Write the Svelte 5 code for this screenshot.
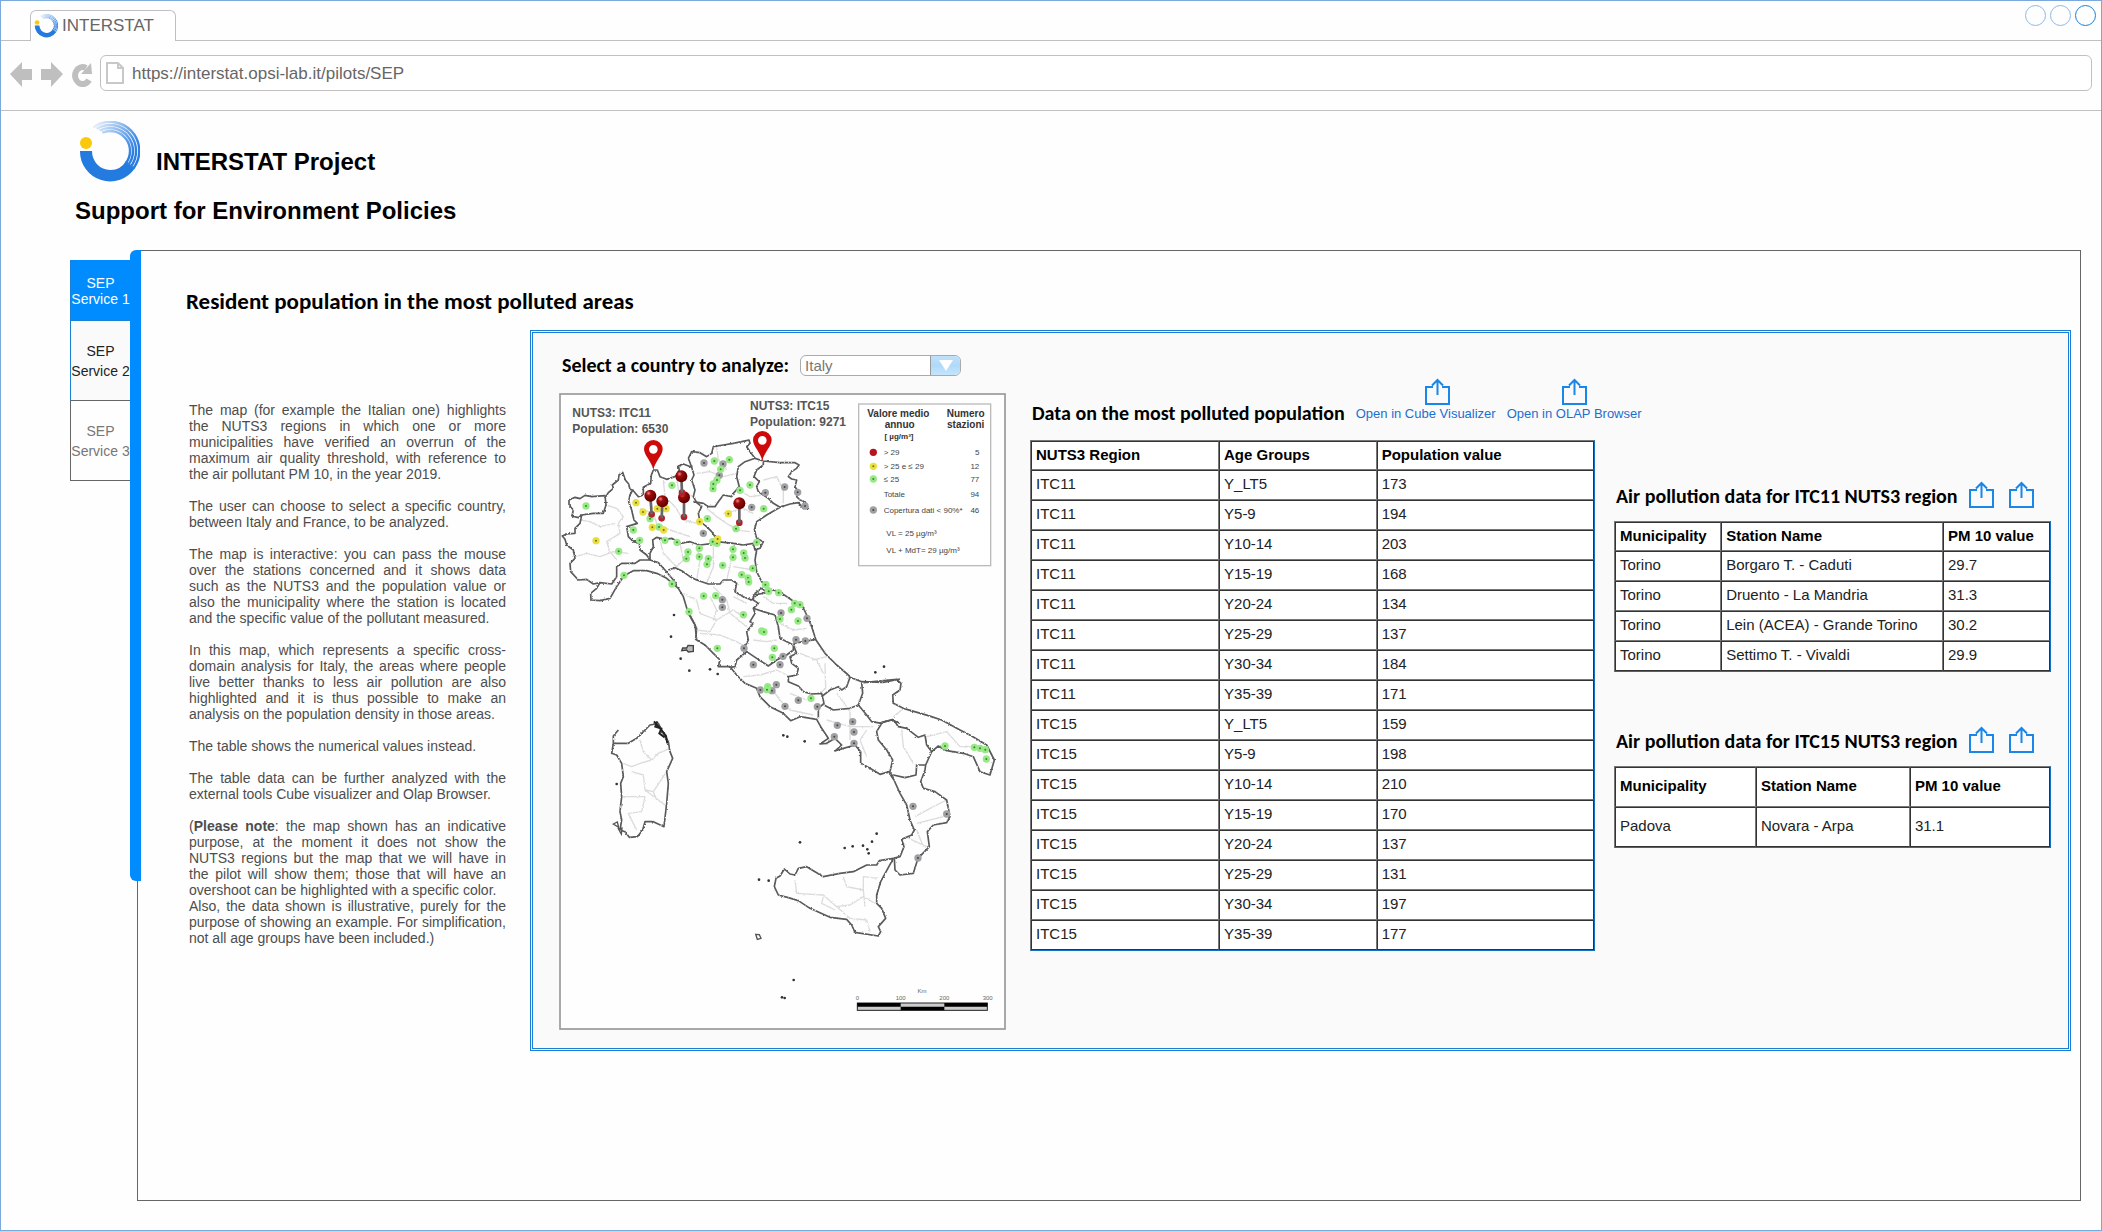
<script>
  const ages = ['Y_LT5', 'Y5-9', 'Y10-14', 'Y15-19', 'Y20-24', 'Y25-29', 'Y30-34', 'Y35-39'];
  const values = {
    ITC11: [173, 194, 203, 168, 134, 137, 184, 171],
    ITC15: [159, 198, 210, 170, 137, 131, 197, 177]
  };
  const population = Object.entries(values).flatMap(([region, list]) =>
    list.map((value, i) => ({ region, age: ages[i], value }))
  );

  const pollution = [
    {
      region: 'ITC11',
      kind: 'dense',
      rows: [
        ['Torino', 'Borgaro T. - Caduti', '29.7'],
        ['Torino', 'Druento - La Mandria', '31.3'],
        ['Torino', 'Lein (ACEA) - Grande Torino', '30.2'],
        ['Torino', 'Settimo T. - Vivaldi', '29.9']
      ]
    },
    { region: 'ITC15', kind: 'roomy', rows: [['Padova', 'Novara - Arpa', '31.1']] }
  ];

  const services = ['SEP Service 1', 'SEP Service 2', 'SEP Service 3'];
  let active = $state(0);
  let country = $state('Italy');

  // Fading arcs of the logo, drawn round the centre of its ring.
  const arcs = [29, 26, 23, 20].map((r, i) => {
    const at = (deg) => {
      const a = (deg * Math.PI) / 180;
      return `${(32 + r * Math.cos(a)).toFixed(1)} ${(30 + r * Math.sin(a)).toFixed(1)}`;
    };
    return `M${at(38)}A${r} ${r} 0 0 0 ${at(-125 + i * 4)}`;
  });

  // Station dots and outlines are kept in three blocks: north, centre, south.
  const blocks = [
    {
      id: 'north',
      shift: 'translate(-27 -39)',
      outlines: [
        'M57 360L75 352 90 356 105 346 125 350 165 347 168 375 160 400 130 400 95 405 85 413 66 408 70 390 57 375Z',
        'M168 350L175 338 190 325 187 315 205 300 207 285 218 277 226 300 236 312 240 328 248 330 240 345 236 365 245 390 252 420 262 430 230 440 235 470 250 485 268 490 270 510 290 525 300 540 270 540 255 550 215 550 200 560 200 590 185 612 150 608 130 612 110 598 85 600 62 575 60 550 75 535 70 510 50 495 45 478 37 468 50 462 75 460 75 445 90 430 95 405',
        'M150 608L140 625 122 640 123 660 150 662 180 655 200 620 222 587 250 572 290 572 320 580 350 595 385 625 400 650 412 690 425 715 440 745 437 780',
        'M300 540L325 548 345 570 370 600 380 615',
        'M248 330L265 350 280 345 280 322 302 310 304 285 310 270 322 270 330 290 350 298 375 290 388 270 385 258 400 252 425 262 432 285 425 300 435 330 430 350 440 368 455 380 445 400 450 425 470 440 485 455 500 478 490 490 450 495 420 485 390 490 365 475 345 478 320 472 308 480 310 500 300 520 300 540',
        'M425 262L415 235 425 215 450 218 470 230 485 220 490 200 520 195 550 190 575 185 597 180 600 190 590 200 600 215 615 235 585 245 565 260 560 290 568 320 550 340 545 350 520 345 505 365 495 380 475 380 460 370 430 365',
        'M615 235L640 243 690 248 735 248 747 255 740 265 725 275 715 290 725 297 740 300 735 320 745 335 740 350 750 360 765 365 775 385 760 385 745 368 720 372 690 382 670 370 655 355 640 345 625 335 620 320 628 305 612 290 620 270 640 255 640 243',
        'M690 382L650 405 620 425 613 450 620 475 640 485 630 505 615 510 610 490 580 495 550 490 500 485',
        'M620 510L615 540 620 575 635 605 650 620 655 640',
        'M355 570L375 563 395 572 420 590 440 600 475 612 510 612 520 600 545 600 560 610 555 635 580 650 605 660 620 645 615 640 635 625 655 640'
      ],
      inner: [
        'M168 375L200 385 220 410 205 430 210 460 170 485 180 515 200 540',
        'M90 420L120 425 150 440 195 430M75 530L110 520 150 530 190 515 235 520',
        'M270 385L310 400 320 430 360 450 420 470M340 300L345 350 375 380 400 420 440 430M380 290L385 330 430 350',
        'M440 280L480 275 520 290 560 280M500 200L505 240 530 270',
        'M470 385L500 410 530 430 560 450 600 455M520 400L580 385 610 400M570 330L600 350 640 345',
        'M640 300L680 290 700 330 700 370',
        'M330 480L340 520 380 560M390 490L400 540 370 570M440 495L450 540 440 600M490 490L490 560 470 610M550 495L540 560 530 600M550 560L610 570',
        'M400 640L440 660 450 700 500 720M490 620L530 660 540 700 590 740'
      ],
      green: [[108,378],[366,316],[493,243],[538,239],[512,268],[501,300],[490,312],[489,326],[570,331],[600,315],[641,386],[472,416],[558,446],[300,416],[327,441],[250,450],[269,481],[206,514],[345,481],[381,487],[414,516],[409,536],[448,505],[448,530],[475,536],[471,553],[518,556],[549,508],[549,532],[581,519],[585,534],[608,565],[575,584],[594,594],[596,606],[620,487],[222,586],[366,612],[417,695],[648,614],[655,632],[501,490],[488,485]],
      yellow: [[138,482],[258,368],[279,396],[322,386],[348,386],[307,442],[341,450],[535,401],[449,425],[503,477]],
      grey: [[462,249],[519,252],[508,286],[646,338],[704,321],[743,337],[605,382],[460,460],[765,378]]
    },
    {
      id: 'centre',
      shift: 'translate(183 501)',
      outlines: [
        'M440 85L478 95 515 120 548 140 560 165 575 200 588 240 615 280 650 315 685 345 690 352 725 365 790 367 840 357',
        'M205 160L225 195 230 240 255 255 280 280 300 300 295 320 330 320 350 345 375 370 410 385 420 410 450 440 490 460 512 482 540 470 590 478 605 505 625 535 600 552 620 550 645 535 665 555 645 573 660 568 705 555 722 575 722 610 750 625 780 643 808 635 820 650',
        'M440 98L400 105 400 120 415 130 400 145 405 160 390 185 400 190 380 215 385 240 375 260 380 275 350 300 345 320 330 322',
        'M400 145L430 155 465 165 475 200 480 235 520 255 520 270 500 285 470 300 445 318 410 295 380 275',
        'M520 250L550 245 588 238',
        'M520 255L530 280 510 290 515 310 535 325 530 345 505 350 505 365 535 378 550 395 575 402 605 400 612 430 595 445 595 475',
        'M605 410L630 390 655 380 665 390 680 380 690 352',
        'M612 435L640 450 690 445 715 435',
        'M725 367L728 400 715 435 740 465 755 485 785 490 770 515 775 540 800 570 818 600 810 635',
        'M785 487L815 480 840 490'
      ],
      inner: [
        'M230 210L270 215 290 180 340 150 375 175M240 220L300 225 350 245 375 260M270 110L290 150 280 180M340 110L380 130',
        'M400 240L440 245 470 240M480 190L520 210 560 205M430 110L460 130 500 130',
        'M370 350L420 345 470 330 500 345M450 380L480 420 510 450 580 465M510 400L560 420',
        'M540 280L590 300 610 340M580 300L620 290M615 310L617 385 600 400M650 400L680 440M620 480L690 500 760 500M690 450L690 540M740 590L720 540 740 510'
      ],
      green: [[251,108],[287,107],[370,164],[292,265],[425,213],[432,216],[463,265],[457,292],[443,380],[441,389],[573,415],[436,74],[446,94],[476,98],[524,130],[540,134],[514,149],[480,177],[534,183]],
      yellow: [],
      grey: [[307,119],[307,142],[483,159],[561,175],[528,239],[556,243],[372,265],[489,289],[400,314],[480,314],[421,390],[469,374],[456,392],[535,421],[495,439],[592,440],[652,496],[698,485],[702,516],[643,530],[702,550]]
    },
    {
      id: 'south',
      shift: 'translate(-27 711)',
      outlines: [
        'M940 158L1040 148 1053 160 1050 180 1028 195 1030 220 1060 235 1135 257 1175 270 1230 300 1265 318 1310 345 1333 390 1320 435 1290 425 1270 380 1240 370 1190 362 1165 348 1145 365 1127 405 1125 420 1112 455 1120 475 1155 485 1190 510 1200 560 1190 578 1150 585 1132 605 1138 650 1104 685 1090 730 1050 735 1035 720 1033 685',
        'M1018 430L1032 450 1050 490 1070 525 1080 570 1093 600 1085 615 1055 628 1062 650 1050 680 1030 685',
        'M995 278L1030 268 1045 290 1070 295 1105 322 1125 315 1130 345 1145 365',
        'M1127 405L1100 405 1098 435 1065 443 1030 435',
        'M1030 685L988 692 980 705 950 705 910 725 870 730 820 740 795 725 770 710 745 715 735 735 720 732 703 717 690 738 678 745 673 770 685 795 715 803 745 812 780 835 840 862 890 868 905 885 915 907 985 918 992 905 985 890 1007 865 995 835 980 820 980 795 992 755 1030 685',
        'M190 340L190 318 205 300M190 340L235 340 260 325 300 285 325 280 340 310 355 335 360 365 368 385 350 425 355 460 350 520 342 590 310 575 285 575 278 600 262 620 238 622 225 605 210 600 215 570 210 545 215 500 212 460 220 440 215 400 200 375 185 370 190 340'
      ],
      inner: [
        'M270 330L280 365 305 390 325 370 360 355M220 400L245 410 270 400 305 390M245 425L280 435 285 480 310 485 350 425M285 480L345 525M220 500L285 500 275 545 235 550 260 600M310 485L320 510',
        'M1030 260L1055 240M1055 300L1060 350 1090 400M1130 320L1190 305 1230 350 1270 350M1095 560L1150 530 1190 510M1100 580L1180 560M1065 620L1130 650M1100 600L1120 650',
        'M735 750L740 790 820 795 860 830 900 825 940 800 975 820M880 740L890 770 940 780 940 740 985 745M820 800L815 820 855 840M860 830L900 865 950 870 960 905M940 780L945 830'
      ],
      green: [[1185,348],[1273,352],[1290,355],[1306,359],[1309,387]],
      yellow: [],
      grey: [[1089,529],[1190,552],[1104,684]]
    }
  ];

  const pins = [[301,347,305,403],[337,364,335,415],[402,352,402,411],[394,289,396,338],[568,370,568,428]];
  const markers = [[310,208],[637,181]];
  const islets = [[363,20],[392,86],[418,122],[480,118],[503,132],[976,127],[1002,110],[700,316],[712,320],[764,334],[750,637],[884,654],[908,649],[939,647],[952,658],[956,670],[966,635],[980,611],[627,749],[656,752],[731,1050],[696,1102],[704,1104],[200,462],[372,-45]];
  const legend = [
    { y: 217, label: '> 29', count: 5, tone: 'red' },
    { y: 259, label: '> 25 e ≤ 29', count: 12, tone: 'yellow' },
    { y: 297, label: '≤ 25', count: 77, tone: 'green' },
    { y: 344, label: 'Totale', count: 94, tone: '' },
    { y: 390, label: 'Copertura dati < 90%*', count: 46, tone: 'grey' }
  ];
</script>

{#snippet logo(cls, gid)}
  <svg class={cls} viewBox="0 0 62 62" aria-hidden="true">
    <defs>
      <linearGradient id={gid} gradientUnits="userSpaceOnUse" x1="14" y1="6" x2="54" y2="34">
        <stop offset="0" stop-color="#2a7de1" stop-opacity="0.1" />
        <stop offset="1" stop-color="#2a7de1" />
      </linearGradient>
    </defs>
    <path d="M2 30A30 30 0 0 0 57 47L48 40A18 18 0 0 1 32 49A18 19 0 0 1 14 30Z" fill="#237be0" />
    {#each arcs as d}
      <path {d} fill="none" stroke="url(#{gid})" stroke-width="2.4" />
    {/each}
    <circle cx="8" cy="22" r="6" fill="#fbc90c" />
  </svg>
{/snippet}

{#snippet share()}
  <svg class="share" viewBox="0 0 25 27" fill="none" stroke="#1a86e8" stroke-width="2" aria-hidden="true">
    <path d="M8 9H1V26H24V9H17" />
    <path d="M12.5 17V2M7 7.5L12.5 2 18 7.5" />
  </svg>
{/snippet}

<div class="window">
  <div class="strip">
    <div class="tab">
      <span class="favicon">{@render logo('favlogo', 'fadeSmall')}</span>
      <span>INTERSTAT</span>
    </div>
    <div class="controls">
      <button aria-label="Minimize"></button>
      <button aria-label="Maximize"></button>
      <button class="close" aria-label="Close"></button>
    </div>
  </div>

  <div class="toolbar">
    <button class="nav" aria-label="Back">
      <svg viewBox="0 0 23 25"><path d="M0 12L12 0V7H22V18H12V25Z" fill="#bfbfbf" /></svg>
    </button>
    <button class="nav" aria-label="Forward">
      <svg viewBox="0 0 23 25"><path d="M23 12L11 0V7H1V18H11V25Z" fill="#bfbfbf" /></svg>
    </button>
    <button class="nav" aria-label="Reload">
      <svg viewBox="0 0 23 25">
        <path d="M16 6A7.5 8.5 0 1 0 19 18" fill="none" stroke="#bfbfbf" stroke-width="6" />
        <path d="M21 1L22 12H11Z" fill="#bfbfbf" />
      </svg>
    </button>
    <div class="address">
      <svg viewBox="0 0 18 22" aria-hidden="true">
        <path d="M1 1H12L17 6V21H1ZM12 1V6H17" fill="none" stroke="#c8c8c8" stroke-width="2" />
      </svg>
      <input type="text" aria-label="Address" value="https://interstat.opsi-lab.it/pilots/SEP" />
    </div>
  </div>

  <header>
    <div class="brand">
      {@render logo('biglogo', 'fadeLarge')}
      <h1>INTERSTAT Project</h1>
    </div>
    <h2>Support for Environment Policies</h2>
  </header>

  <div class="body">
    <nav aria-label="Services">
      {#each services as name, i}
        <button class:active={active === i} class="service s{i}" onclick={() => (active = i)}>{name}</button>
      {/each}
    </nav>

    <main>
      <h3>Resident population in the most polluted areas</h3>
      <div class="columns">
        <div class="text">
          <p>The map (for example the Italian one) highlights the NUTS3 regions in which one or more municipalities have verified an overrun of the maximum air quality threshold, with reference to the air pollutant PM 10, in the year 2019.</p>
          <p>The user can choose to select a specific country, between Italy and France, to be analyzed.</p>
          <p>The map is interactive: you can pass the mouse over the stations concerned and it shows data such as the NUTS3 and the population value or also the municipality where the station is located and the specific value of the pollutant measured.</p>
          <p>In this map, which represents a specific cross-domain analysis for Italy, the areas where people live better thanks to less air pollution are also highlighted and it is thus possible to make an analysis on the population density in those areas.</p>
          <p>The table shows the numerical values instead.</p>
          <p>The table data can be further analyzed with the external tools Cube visualizer and Olap Browser.</p>
          <p>(<b>Please note</b>: the map shown has an indicative purpose, at the moment it does not show the NUTS3 regions but the map that we will have in the pilot will show them; those that will have an overshoot can be highlighted with a specific color.<br />Also, the data shown is illustrative, purely for the purpose of showing an example. For simplification, not all age groups have been included.)</p>
        </div>

        <section class="panel">
          <div class="mapcol">
            <div class="picker">
              <label for="country">Select a country to analyze:</label>
              <span class="dropdown">
                <select id="country" bind:value={country}>
                  <option>Italy</option>
                  <option>France</option>
                </select>
                <span class="arrow"><svg viewBox="0 0 14 11" aria-hidden="true"><path d="M0 0H14L7 11Z" fill="#fff" /></svg></span>
              </span>
            </div>

            <svg class="map" viewBox="0 0 1341 1911" role="img" aria-label="Map of Italy with monitoring stations">
              <defs>
                <filter id="rough" x="-5%" y="-5%" width="110%" height="110%">
                  <feTurbulence type="fractalNoise" baseFrequency="0.2" numOctaves="2" seed="4" />
                  <feDisplacementMap in="SourceGraphic" scale="7" xChannelSelector="R" yChannelSelector="G" />
                </filter>
                <radialGradient id="ball" cx="0.35" cy="0.3" r="0.7">
                  <stop offset="0" stop-color="#e88" />
                  <stop offset="0.3" stop-color="#a00b0b" />
                  <stop offset="1" stop-color="#5c0000" />
                </radialGradient>
              </defs>
              <rect x="3" y="3" width="1335" height="1905" fill="#fefefe" stroke="#999" stroke-width="5" />

              {#each blocks as block (block.id)}
                <g transform={block.shift}>
                  <g filter="url(#rough)" fill="none" stroke-linejoin="round">
                    {#each block.inner as d}<path class="inner" {d} />{/each}
                    {#each block.outlines as d}<path class="coast" {d} />{/each}
                  </g>
                </g>
              {/each}
              {#each blocks as block (block.id)}
                <g transform={block.shift}>
                  {#each ['grey', 'green', 'yellow'] as tone}
                    {#each block[tone] as [x, y]}
                      <circle class="halo {tone}" cx={x} cy={y} r="11" />
                      <circle class="core {tone}" cx={x} cy={y} r="3" />
                    {/each}
                  {/each}
                </g>
              {/each}

              <g transform="translate(-27 711)" fill="#333">
                {#each islets as [x, y]}<circle cx={x} cy={y} r="4" />{/each}
                <path d="M395 62L398 54 410 54 414 46 430 47 430 64 415 66 410 60Z" stroke="#444" stroke-width="4" fill="#bbb" />
                <path d="M312 274L326 290 338 305 348 318 352 340M322 274L316 290 334 296 328 310 344 322" stroke="#222" stroke-width="6" fill="none" />
                <path d="M190 582L202 576 206 592ZM205 596L216 594 214 612ZM617 913L628 914 633 925 622 928Z" stroke="#555" stroke-width="4" fill="none" />
                <rect x="922" y="1119" width="390" height="22" fill="#ccc" stroke="#222" stroke-width="3" />
                <path d="M922 1119H1052V1130H922ZM1052 1130H1183V1141H1052ZM1183 1119H1312V1130H1183Z" fill="#000" />
                <g class="scale">
                  <text x="922" y="1110">0</text>
                  <text x="1052" y="1110">100</text>
                  <text x="1183" y="1110">200</text>
                  <text x="1313" y="1110">300</text>
                  <text x="1116" y="1089">Km</text>
                </g>
              </g>

              <g transform="translate(-27 -39)">
                <g class="note">
                  <text x="67" y="110">NUTS3: ITC11</text>
                  <text x="67" y="158">Population: 6530</text>
                  <text x="600" y="89">NUTS3: ITC15</text>
                  <text x="600" y="137">Population: 9271</text>
                </g>
                {#each pins as [x, y, tx, ty]}
                  <circle cx={tx} cy={ty} r="10" fill="#b5202c" />
                  <path d="M{x} {y}L{tx} {ty}" stroke="#666" stroke-width="8" />
                  <circle cx={x} cy={y} r="18" fill="url(#ball)" />
                {/each}
                {#each markers as [x, y]}
                  <path transform="translate({x} {y})" d="M0 62C-5 36 -28 18 -28 -1A28 27 0 0 1 28 -1C28 18 5 36 0 62ZM0 -13A13 13 0 0 0 0 13A13 13 0 0 0 0 -13Z" fill="#cc0a0a" fill-rule="evenodd" />
                {/each}
              </g>

              <g transform="translate(663 -39)">
                <rect x="236" y="72" width="396" height="485" fill="#fff" stroke="#bbb" stroke-width="4" />
                <g class="legendhead">
                  <text x="355" y="112">Valore medio</text>
                  <text x="359" y="145">annuo</text>
                  <text class="unit" x="357" y="178">[ µg/m³]</text>
                  <text x="557" y="112">Numero</text>
                  <text x="557" y="145">stazioni</text>
                </g>
                <g class="legendrow">
                  {#each legend as row}
                    {#if row.tone}
                      <circle class="halo {row.tone}" cx="280" cy={row.y} r="11" />
                      <circle class="core {row.tone}" cx="280" cy={row.y} r="3" />
                    {/if}
                    <text x="311" y={row.y + 8}>{row.label}</text>
                    <text class="count" x="598" y={row.y + 8}>{row.count}</text>
                  {/each}
                  <text x="319" y="469">VL = 25 µg/m³</text>
                  <text x="319" y="519">VL + MdT= 29 µg/m³</text>
                </g>
              </g>
            </svg>
          </div>

          <div class="popcol">
            <div class="tablehead">
              <h4>Data on the most polluted population</h4>
              <a class="cube" href="#cube">{@render share()}<span>Open in Cube Visualizer</span></a>
              <a href="#olap">{@render share()}<span>Open in OLAP Browser</span></a>
            </div>
            <table class="population">
              <thead>
                <tr><th scope="col">NUTS3 Region</th><th scope="col">Age Groups</th><th scope="col">Population value</th></tr>
              </thead>
              <tbody>
                {#each population as row}
                  <tr><td>{row.region}</td><td>{row.age}</td><td>{row.value}</td></tr>
                {/each}
              </tbody>
            </table>
          </div>

          <div class="aircol">
            {#each pollution as block}
              <div class="air">
                <div class="airhead">
                  <h4>Air pollution data for {block.region} NUTS3 region</h4>
                  <div class="links">
                    <a href="#cube-{block.region}" aria-label="Open in Cube Visualizer">{@render share()}</a>
                    <a href="#olap-{block.region}" aria-label="Open in OLAP Browser">{@render share()}</a>
                  </div>
                </div>
                <table class={block.kind}>
                  <thead>
                    <tr><th scope="col">Municipality</th><th scope="col">Station Name</th><th scope="col">PM 10 value</th></tr>
                  </thead>
                  <tbody>
                    {#each block.rows as row}
                      <tr>{#each row as cell}<td>{cell}</td>{/each}</tr>
                    {/each}
                  </tbody>
                </table>
              </div>
            {/each}
          </div>
        </section>
      </div>
    </main>
  </div>
</div>

<style>
  :global(body) { margin: 0; background: #fff; }
  * { box-sizing: border-box; }
  button { font: inherit; cursor: pointer; }
  h1, h2, h3, h4, p { margin: 0; }

  .window {
    min-height: 100vh;
    display: flex;
    flex-direction: column;
    border: 1px solid #7ba9dd;
    background: #fefefe;
    font-family: "Liberation Sans", Arial, sans-serif;
    color: #000;
  }

  .strip {
    height: 40px;
    display: flex;
    justify-content: space-between;
    border-bottom: 1px solid #c0c0c0;
    padding: 0 5px 0 29px;
  }
  .tab {
    width: 146px;
    height: 31px;
    margin-top: 9px;
    padding: 0 4px 0 3px;
    display: flex;
    align-items: center;
    gap: 4px;
    border: 1px solid #c0c0c0;
    border-bottom: 0;
    border-radius: 6px 6px 0 0;
    background: #fff;
    font-size: 17px;
    color: #666;
  }
  .favicon { display: flex; }
  .favicon :global(.favlogo) { width: 24px; height: 24px; }
  .controls { display: flex; gap: 4px; padding-top: 4px; }
  .controls button {
    width: 21px;
    height: 21px;
    padding: 0;
    border: 1px solid #8db9ea;
    border-radius: 50%;
    background: none;
  }
  .controls .close { border-color: #1a80d8; }

  .toolbar {
    height: 70px;
    display: flex;
    align-items: flex-start;
    gap: 7px;
    padding: 14px 9px 0 9px;
    border-bottom: 1px solid #c0c0c0;
  }
  .nav { width: 23px; height: 25px; margin-top: 7px; padding: 0; border: 0; background: none; }
  .nav svg { display: block; width: 23px; height: 25px; }
  .address {
    flex: 1;
    height: 36px;
    display: flex;
    align-items: center;
    gap: 8px;
    padding: 0 5px;
    border: 1px solid #c0c0c0;
    border-radius: 6px;
    background: #fff;
  }
  .address svg { width: 18px; height: 22px; }
  .address input {
    flex: 1;
    border: 0;
    padding: 1px 0 0;
    outline: 0;
    background: none;
    font: 17px "Liberation Sans", Arial, sans-serif;
    color: #666;
  }

  header { padding: 10px 0 25px 74px; }
  .brand { display: flex; align-items: flex-end; gap: 16px; padding: 0 0 14px 3px; }
  .brand :global(.biglogo) { width: 62px; height: 62px; }
  h1, h2 { font-size: 24px; line-height: 28px; }
  h1 { padding-bottom: 7px; }

  .body { flex: 1; display: flex; padding: 0 20px 29px 69px; }
  nav { width: 67px; flex: none; padding: 10px 7px 0 0; }
  .service {
    display: block;
    width: 60px;
    height: 80px;
    padding: 0;
    border: 1px solid #666;
    border-width: 0 0 1px 1px;
    background: #fefefe;
    color: #777;
    font-size: 14px;
    line-height: 20px;
  }
  .s1 { border-left-color: #1a80d8; background: #fafafa; color: #222; }
  .service.active { height: 61px; padding-top: 1px; border-color: #1a80d8; background: #008cff; color: #fff; line-height: 16px; }

  main {
    position: relative;
    flex: 1;
    min-width: 0;
    border: 1px solid #666;
    padding: 36px 9px 20px 48px;
  }
  main::before {
    content: "";
    position: absolute;
    left: -8px;
    top: -1px;
    width: 11px;
    height: 631px;
    border-radius: 6px 0 0 6px;
    background: #008cff;
  }
  h3, h4, label { font-family: Carlito, Lato, sans-serif; font-weight: 700; white-space: nowrap; }
  h3 { font-size: 23px; line-height: 28px; }
  .columns { display: flex; gap: 24px; padding: 15px 0 0 3px; align-items: flex-start; }
  .text {
    width: 317px;
    flex: none;
    padding-top: 72px;
    font-size: 14px;
    line-height: 16px;
    color: #4d4d4d;
    text-align: justify;
  }
  .text p + p { margin-top: 16px; }

  .panel {
    flex: 1;
    min-width: 0;
    display: grid;
    grid-template-columns: 447px minmax(0, 589fr) minmax(0, 456fr);
    padding: 0 17px 18px 26px;
    border: 3px double #1a7fd4;
    background: #fafafa;
  }
  .picker { display: flex; align-items: center; gap: 11px; padding: 21px 0 17px 3px; height: 60px; }
  label { font-size: 20px; }
  .dropdown {
    position: relative;
    display: flex;
    width: 161px;
    height: 21px;
    border: 1px solid #aaa;
    border-radius: 6px;
    background: #fff;
    overflow: hidden;
  }
  select {
    appearance: none;
    flex: 1;
    border: 0;
    padding: 0 4px;
    background: none;
    font: 15px "Liberation Sans", Arial, sans-serif;
    color: #777;
  }
  .arrow {
    position: absolute;
    right: 0;
    top: 0;
    bottom: 0;
    width: 30px;
    display: flex;
    align-items: center;
    justify-content: center;
    border-left: 1px solid #999;
    background: linear-gradient(#bfe2fb, #b0d9f9 50%, #c4e6fd);
    pointer-events: none;
  }
  .arrow svg { width: 14px; height: 11px; }

  .map { display: block; width: 100%; height: auto; font-family: "Liberation Sans", Arial, sans-serif; }
  .coast { stroke: #5a5a5a; stroke-width: 5; }
  .inner { stroke: #dcdcdc; stroke-width: 4; }
  .halo.green { fill: #98e888; }
  .halo.yellow { fill: #e8e040; }
  .halo.grey { fill: #a0a0a4; }
  .halo.red, .core.red { fill: #b5141e; }
  .core.green { fill: #2f8c20; }
  .core.yellow { fill: #77701a; }
  .core.grey { fill: #444; }
  .note text { font-size: 36px; font-weight: 700; fill: #555; }
  .scale text { font-size: 18px; text-anchor: middle; fill: #666; }
  .legendhead text { font-size: 30px; font-weight: 700; text-anchor: middle; fill: #333; }
  .legendhead .unit { font-size: 24px; }
  .legendrow text { font-size: 24px; fill: #444; }
  .legendrow .count { text-anchor: end; }

  .popcol { padding: 46px 0 0 24px; min-width: 0; }
  .tablehead { display: flex; align-items: flex-end; height: 61px; padding: 0 0 17px 2px; gap: 11px; white-space: nowrap; }
  h4 { font-size: 20px; line-height: 24px; }
  .tablehead h4 { line-height: 20px; }
  a { color: #1a6fd0; text-decoration: none; display: flex; flex-direction: column; align-items: center; }
  .tablehead a { font-size: 13px; line-height: 18px; }
  .cube .share { margin-left: 24px; }
  .share { display: block; width: 25px; height: 27px; }

  .aircol { padding: 148px 0 0 19px; min-width: 0; }
  .air + .air { margin-top: 54px; }
  .airhead { display: flex; align-items: center; height: 40px; padding: 0 0 14px 2px; gap: 11px; }
  .airhead h4 { padding-top: 4px; }
  .links { display: flex; gap: 15px; }

  table {
    width: 100%;
    table-layout: fixed;
    border-collapse: separate;
    border-spacing: 0;
    border: 1px solid #777;
    border-right-color: #1470c4;
    border-bottom-color: #1470c4;
    background: #fff;
    font-size: 15px;
    line-height: 18px;
    text-align: left;
  }
  th, td { height: 30px; padding: 0 4px 2px; border: 1px solid #333; border-right-color: #777; border-bottom-color: #777; }
  td { color: #222; }
  th { height: 29px; }
  td:last-child, th:last-child { border-right-color: #333; }
  tr:last-child td { border-bottom-color: #333; }
  .population th:nth-child(1) { width: 33.4%; }
  .population th:nth-child(2) { width: 28%; }
  .dense th:nth-child(1) { width: 24.4%; }
  .dense th:nth-child(2) { width: 51%; }
  .roomy th, .roomy td { height: 40px; }
  .roomy th:nth-child(1) { width: 32.4%; }
  .roomy th:nth-child(2) { width: 35.4%; }
</style>
